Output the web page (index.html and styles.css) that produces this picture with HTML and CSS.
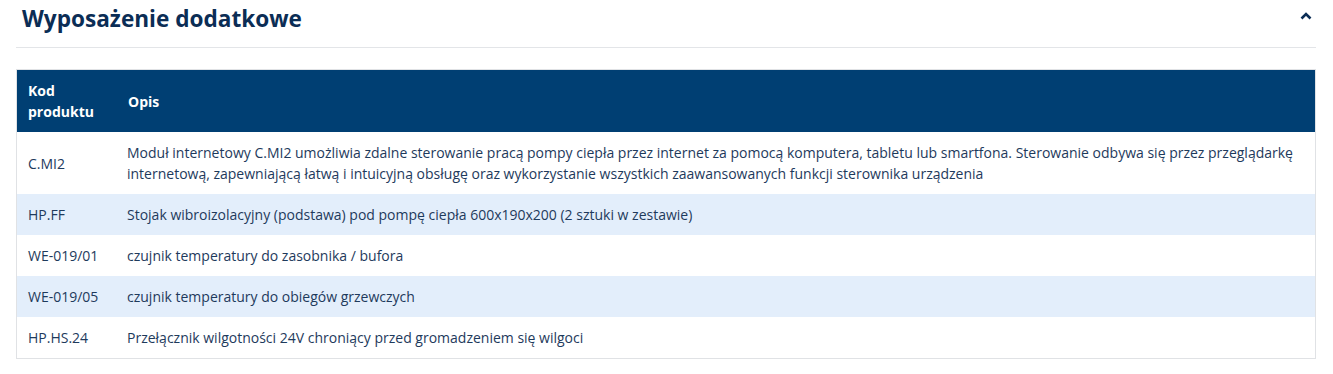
FILE: index.html
```html
<!DOCTYPE html>
<html lang="pl">
<head>
<meta charset="utf-8">
<title>Wyposażenie dodatkowe</title>
<link rel="stylesheet" href="styles.css">
</head>
<body>
<section class="section">
  <div class="section-head">
    <h2 class="section-title">Wyposażenie dodatkowe</h2>
    <svg class="caret" width="12" height="8" viewBox="0 0 12 8" aria-hidden="true"><path d="M1.5 6.5 L6 2 L10.5 6.5" fill="none" stroke="#0b2d55" stroke-width="2.6" stroke-linecap="butt"/></svg>
  </div>
  <table class="spec">
    <thead>
      <tr><th class="col-code">Kod<br>produktu</th><th>Opis</th></tr>
    </thead>
    <tbody>
      <tr><td>C.MI2</td><td>Moduł internetowy C.MI2 umożliwia zdalne sterowanie pracą pompy ciepła przez internet za pomocą komputera, tabletu lub smartfona. Sterowanie odbywa się przez przeglądarkę internetową, zapewniającą łatwą i intuicyjną obsługę oraz wykorzystanie wszystkich zaawansowanych funkcji sterownika urządzenia</td></tr>
      <tr><td>HP.FF</td><td>Stojak wibroizolacyjny (podstawa) pod pompę ciepła 600x190x200 (2 sztuki w zestawie)</td></tr>
      <tr><td>WE-019/01</td><td>czujnik temperatury do zasobnika / bufora</td></tr>
      <tr><td>WE-019/05</td><td>czujnik temperatury do obiegów grzewczych</td></tr>
      <tr><td>HP.HS.24</td><td>Przełącznik wilgotności 24V chroniący przed gromadzeniem się wilgoci</td></tr>
    </tbody>
  </table>
</section>
</body>
</html>
```

FILE: styles.css
```css
html, body {
  margin: 0;
  padding: 0;
  background: #ffffff;
}
body {
  font-family: "Open Sans", "Liberation Sans", sans-serif;
  color: #1e3a5c;
}
.section {
  padding: 0 16px 0 16px;
  width: 1300px;
}
.section-head {
  display: flex;
  align-items: center;
  justify-content: space-between;
  height: 48px;
  border-bottom: 1px solid #e3e5e8;
  box-sizing: border-box;
  padding: 0 0 9px 6px;
}
.section-title {
  margin: 0;
  font-size: 22.6px;
  font-weight: 700;
  color: #0b2d55;
  line-height: 28px;
}
.caret {
  margin-right: 4px;
  margin-bottom: 6px;
}
.spec {
  margin-top: 21px;
  width: 100%;
  border-collapse: collapse;
  border: 1px solid #e0e2e5;
  font-size: 14px;
  line-height: 21px;
}
.spec th {
  background: #003f73;
  color: #ffffff;
  font-weight: 700;
  text-align: left;
  padding: 10px 12px 10px 12px;
}
.spec td {
  padding: 10px 12px 10px 11px;
  vertical-align: middle;
  text-align: left;
}
.spec th:first-child {
  padding-left: 11px;
}
.spec .col-code {
  width: 76px;
}
.spec tbody tr:nth-child(even) td {
  background: #e3eefb;
}
```
